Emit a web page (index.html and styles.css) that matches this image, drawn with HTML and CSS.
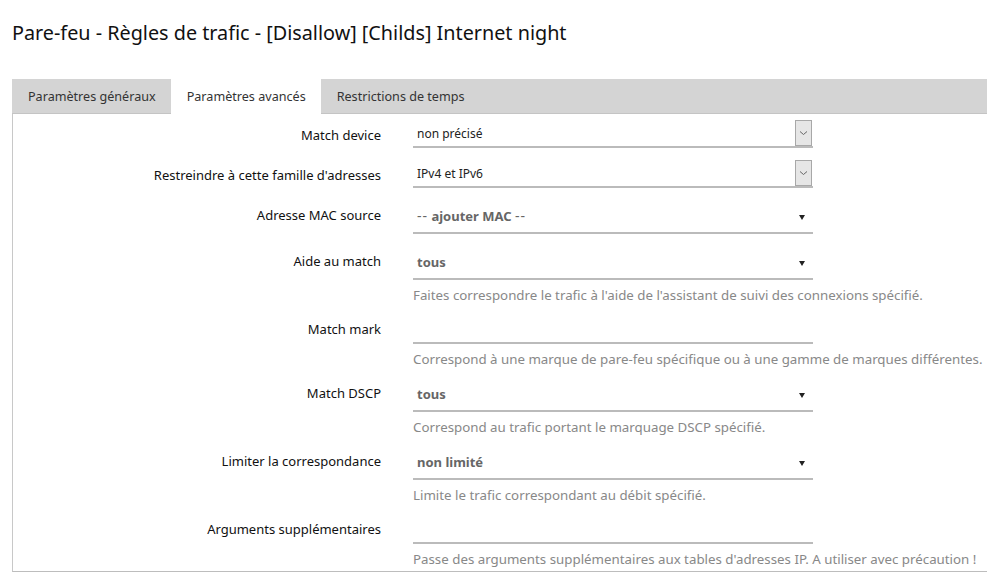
FILE: index.html
```html
<!DOCTYPE html>
<html lang="fr">
<head>
<meta charset="utf-8">
<title>Pare-feu - Règles de trafic</title>
<link rel="stylesheet" href="styles.css">
</head>
<body>
<h2 class="page-title">Pare-feu - Règles de trafic - [Disallow] [Childs] Internet night</h2>
<div class="tabs">
  <ul class="tab-list">
    <li class="tab">Paramètres généraux</li>
    <li class="tab active">Paramètres avancés</li>
    <li class="tab">Restrictions de temps</li>
  </ul>
  <div class="tab-panel">
    <div class="row row-select">
      <label class="label">Match device</label>
      <div class="field">
        <div class="select">
          <span class="select-value">non précisé</span>
          <span class="select-btn"><svg width="9" height="6" viewBox="0 0 9 6"><path d="M1 1.5 L4.5 4.5 L8 1.5" fill="none" stroke="#666" stroke-width="1"/></svg></span>
        </div>
      </div>
    </div>
    <div class="row row-select">
      <label class="label">Restreindre à cette famille d'adresses</label>
      <div class="field">
        <div class="select">
          <span class="select-value">IPv4 et IPv6</span>
          <span class="select-btn"><svg width="9" height="6" viewBox="0 0 9 6"><path d="M1 1.5 L4.5 4.5 L8 1.5" fill="none" stroke="#666" stroke-width="1"/></svg></span>
        </div>
      </div>
    </div>
    <div class="row row-plain">
      <label class="label">Adresse MAC source</label>
      <div class="field">
        <div class="dropdown"><span class="dd-value"><span class="dd-dash">--</span> <b>ajouter MAC</b> <span class="dd-dash">--</span></span><span class="dd-arrow"></span></div>
      </div>
    </div>
    <div class="row">
      <label class="label">Aide au match</label>
      <div class="field">
        <div class="dropdown"><span class="dd-value"><b>tous</b></span><span class="dd-arrow"></span></div>
        <div class="desc">Faites correspondre le trafic à l'aide de l'assistant de suivi des connexions spécifié.</div>
      </div>
    </div>
    <div class="row">
      <label class="label">Match mark</label>
      <div class="field">
        <div class="input"></div>
        <div class="desc">Correspond à une marque de pare-feu spécifique ou à une gamme de marques différentes.</div>
      </div>
    </div>
    <div class="row">
      <label class="label">Match DSCP</label>
      <div class="field">
        <div class="dropdown"><span class="dd-value"><b>tous</b></span><span class="dd-arrow"></span></div>
        <div class="desc">Correspond au trafic portant le marquage DSCP spécifié.</div>
      </div>
    </div>
    <div class="row">
      <label class="label">Limiter la correspondance</label>
      <div class="field">
        <div class="dropdown"><span class="dd-value"><b>non limité</b></span><span class="dd-arrow"></span></div>
        <div class="desc">Limite le trafic correspondant au débit spécifié.</div>
      </div>
    </div>
    <div class="row last">
      <label class="label">Arguments supplémentaires</label>
      <div class="field">
        <div class="input"></div>
        <div class="desc">Passe des arguments supplémentaires aux tables d'adresses IP. A utiliser avec précaution !</div>
      </div>
    </div>
  </div>
</div>
</body>
</html>
```
FILE: styles.css
```css
html, body {
  margin: 0;
  padding: 0;
  background: #fff;
  overflow: hidden;
}
body {
  padding: 0 0 0 12px;
  font-family: "Noto Sans", "Open Sans", sans-serif;
  color: #222;
  width: 1100px;
}
.page-title {
  margin: 20px 0 33px 0;
  font-size: 19.8px;
  line-height: 26px;
  font-weight: normal;
  color: #111;
}
.tabs {
  width: 1060px;
}
.tab-list {
  list-style: none;
  margin: 0;
  padding: 0;
  display: flex;
  background: #d4d4d4;
  border-bottom: 1px solid #c4c4c4;
  height: 34px;
}
.tab {
  padding: 0 15px 0 16px;
  height: 34px;
  line-height: 36px;
  font-size: 12.6px;
  color: #333;
}
.tab.active {
  background: #fff;
  height: 35px;
}
.tab-panel {
  border-left: 1px solid #c8c8c8;
  border-bottom: 1px solid #bdbdbd;
  padding: 6px 0 2px 0;
}
.row {
  display: flex;
  margin-bottom: 9px;
}
.row-select,
.row-plain {
  margin-bottom: 12px;
}
.row.last {
  margin-bottom: 0;
}
.label {
  width: 368px;
  text-align: right;
  padding-top: 5px;
  font-size: 13px;
  line-height: 20px;
  color: #111;
  flex: none;
}
.field {
  margin-left: 32px;
  width: 400px;
  flex: none;
}
.select {
  display: flex;
  justify-content: space-between;
  height: 26px;
  border-bottom: 2px solid #bbb;
}
.select-value {
  padding: 4px 0 0 4px;
  font-size: 12px;
  line-height: 20px;
  color: #222;
}
.select-btn {
  width: 15px;
  height: 24px;
  margin-right: 1px;
  background: #e6e6e6;
  border: 1px solid #a8a8a8;
  display: flex;
  align-items: center;
  justify-content: center;
}
.dropdown {
  display: flex;
  justify-content: space-between;
  align-items: flex-start;
  height: 32px;
  border-bottom: 2px solid #bbb;
}
.dd-value {
  padding: 6px 0 0 4px;
  font-size: 13px;
  line-height: 20px;
  color: #666;
}
.dd-value b {
  color: #666;
}
.dd-dash {
  font-size: 14px;
  letter-spacing: 1px;
}
.dd-arrow {
  margin-top: 15px;
  margin-right: 8px;
  width: 0;
  height: 0;
  border-left: 3.5px solid transparent;
  border-right: 3.5px solid transparent;
  border-top: 5px solid #222;
}
.input {
  height: 28px;
  border-bottom: 2px solid #bbb;
}
.desc {
  margin-top: 5px;
  font-size: 13.3px;
  line-height: 20px;
  color: #888;
  white-space: nowrap;
}
```
